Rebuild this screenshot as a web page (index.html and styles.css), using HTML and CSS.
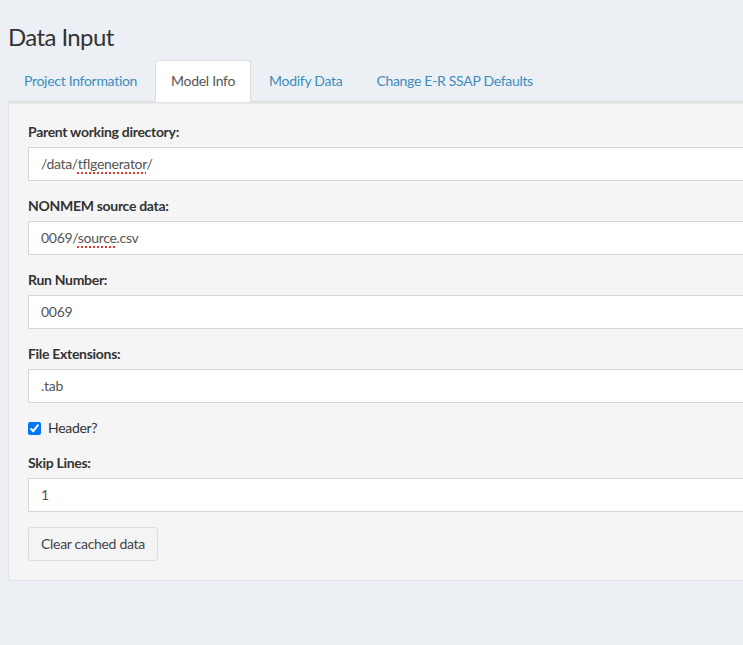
FILE: index.html
```html
<!DOCTYPE html>
<html>
<head>
<meta charset="utf-8">
<link rel="stylesheet" href="styles.css">
</head>
<body>
<div class="page">
  <h1 class="title">Data Input</h1>
  <ul class="tabs">
    <li class="tab"><a>Project Information</a></li>
    <li class="tab active"><a>Model Info</a></li>
    <li class="tab"><a>Modify Data</a></li>
    <li class="tab"><a>Change E-R SSAP Defaults</a></li>
  </ul>
  <div class="well">
    <div class="form-group">
      <label class="label">Parent working directory:</label>
      <div class="form-control">/data/<span class="misspelled">tflgenerator</span>/</div>
    </div>
    <div class="form-group">
      <label class="label">NONMEM source data:</label>
      <div class="form-control">0069/<span class="misspelled">source</span>.csv</div>
    </div>
    <div class="form-group">
      <label class="label">Run Number:</label>
      <div class="form-control">0069</div>
    </div>
    <div class="form-group">
      <label class="label">File Extensions:</label>
      <div class="form-control">.tab</div>
    </div>
    <div class="form-group">
      <label class="checkbox"><input type="checkbox" checked><span>Header?</span></label>
    </div>
    <div class="form-group">
      <label class="label">Skip Lines:</label>
      <div class="form-control">1</div>
    </div>
    <button class="btn">Clear cached data</button>
  </div>
</div>
</body>
</html>
```
FILE: styles.css
```css
html, body {
  margin: 0;
  padding: 0;
  overflow: hidden;
  background: #ecf0f5;
}
body {
  font-family: "Lato", "Liberation Sans", sans-serif;
  font-size: 14px;
  line-height: 20px;
  letter-spacing: -0.3px;
  color: #333;
}
.page {
  padding: 0 0 0 8px;
  width: 900px;
}
.title {
  font-size: 24px;
  font-weight: 400;
  line-height: 26px;
  letter-spacing: -0.6px;
  margin: 0;
  padding-top: 24px;
  height: 36px;
  color: #333;
}
.tabs {
  list-style: none;
  margin: 0;
  padding: 0;
  display: flex;
  border-bottom: 1px solid #ddd;
}
.tab {
  margin-right: 2px;
  margin-bottom: -1px;
}
.tab a {
  display: block;
  padding: 10px 15px;
  border: 1px solid transparent;
  border-radius: 4px 4px 0 0;
  color: #3c8dbc;
}
.tab.active a {
  background: #fff;
  border-color: #ddd #ddd transparent;
  color: #555;
}
.well {
  background: #f5f5f5;
  border: 1px solid #e3e3e3;
  border-radius: 0 0 4px 4px;
  box-shadow: inset 0 1px 1px rgba(0,0,0,0.05);
  padding: 19px;
  height: 439px;
}
.form-group {
  margin-bottom: 15px;
}
.label {
  display: block;
  font-weight: 700;
  margin-bottom: 5px;
}
.form-control {
  height: 34px;
  box-sizing: border-box;
  background: #fff;
  border: 1px solid #d2d6de;
  padding: 6px 12px;
  color: #555;
  line-height: 20px;
}
.misspelled {
  text-decoration: underline dotted #e0372f;
  text-decoration-thickness: 2px;
  text-underline-offset: 3px;
}
.checkbox {
  display: flex;
  align-items: center;
  height: 20px;
  color: #333;
}
.checkbox input {
  margin: 0 7px 0 0;
  width: 13px;
  height: 13px;
}
.btn {
  font-family: inherit;
  font-size: 14px;
  letter-spacing: inherit;
  line-height: 20px;
  height: 34px;
  padding: 6px 12px;
  background: #f4f4f4;
  color: #444;
  border: 1px solid #ddd;
  border-radius: 3px;
}
```
